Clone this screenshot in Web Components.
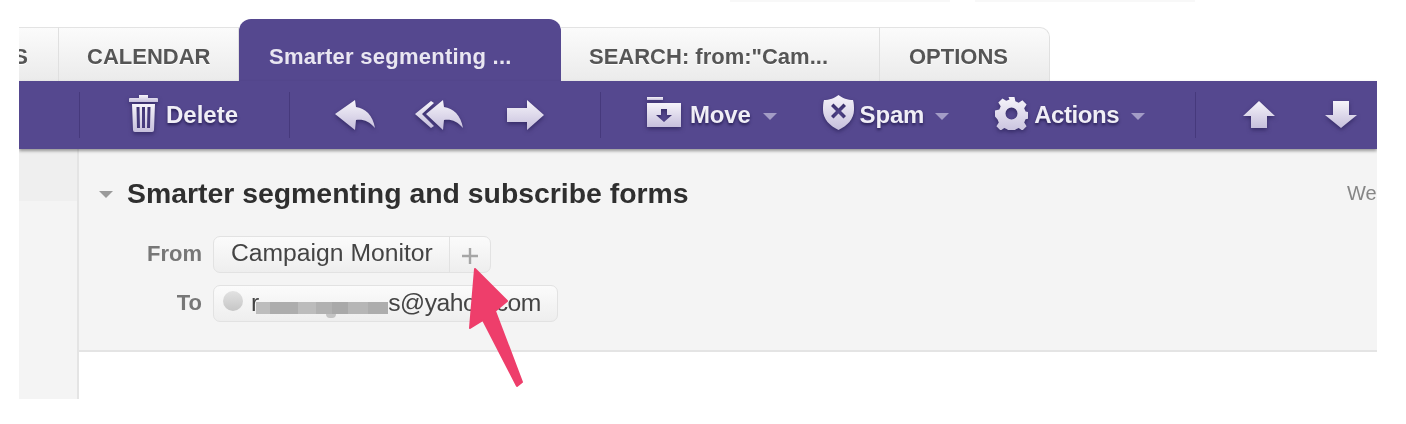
<!DOCTYPE html>
<html>
<head>
<meta charset="utf-8">
<title>Mail</title>
<style>
  html, body { margin: 0; background: #fff; }
  body { width: 1406px; height: 424px; overflow: hidden; font-family: "Liberation Sans", Arial, sans-serif; }
</style>
</head>
<body>
<top-strip></top-strip>
<mail-app>
  <mail-tabs>
    <mail-tab kind="clipped">S</mail-tab>
    <mail-tab style="width:180px">CALENDAR</mail-tab>
    <mail-tab active style="width:322px">Smarter segmenting ...</mail-tab>
    <mail-tab style="width:319px">SEARCH: from:"Cam...</mail-tab>
    <mail-tab kind="last" style="width:170px;padding-left:29px">OPTIONS</mail-tab>
  </mail-tabs>
  <mail-toolbar>
    <tool-sep style="margin-left:60px"></tool-sep>
    <tool-button icon="trash" style="margin-left:49px">Delete</tool-button>
    <tool-sep style="margin-left:51px"></tool-sep>
    <tool-button icon="reply" style="margin-left:45px"></tool-button>
    <tool-button icon="replyall" style="margin-left:40px"></tool-button>
    <tool-button icon="forward" style="margin-left:44px"></tool-button>
    <tool-sep style="margin-left:56px"></tool-sep>
    <tool-button icon="move" menu style="margin-left:46px;letter-spacing:-0.2px">Move</tool-button>
    <tool-button icon="spam" menu style="margin-left:46px;letter-spacing:-0.2px">Spam</tool-button>
    <tool-button icon="gear" menu style="margin-left:46px;letter-spacing:-0.45px">Actions</tool-button>
    <tool-sep style="margin-left:50px"></tool-sep>
    <tool-button icon="up" style="margin-left:47px"></tool-button>
    <tool-button icon="down" style="margin-left:50px"></tool-button>
  </mail-toolbar>
  <mail-body>
    <message-header subject="Smarter segmenting and subscribe forms" date="We">
      <address-row label="From">
        <address-chip add>Campaign Monitor</address-chip>
      </address-row>
      <address-row label="To">
        <address-chip avatar>r<blur-smear></blur-smear><span style="letter-spacing:-0.5px">s@yahoo.com</span></address-chip>
      </address-row>
    </message-header>
  </mail-body>
  <callout-arrow></callout-arrow>
</mail-app>

<script>
  /**
   * Toolbar icons: width, height, gap to the label, lift above the bar's centre, shape
   */
  const ICONS = {
    trash: {
      w: 29, h: 37, gap: 8, lift: 4,
      d: '<path d="M10 0h9v3h9a1 1 0 0 1 1 1v3H0V4a1 1 0 0 1 1-1h9z"/><path d="M3 9h23l-1 26a2 2 0 0 1-2 2H6a2 2 0 0 1-2-2zM7.500 12l.5 21h3l-.5-21zM13 12v21h3V12zM18.500 12l-.5 21h3l.5-21z" fill-rule="evenodd"/>'
    },
    reply: {
      w: 40, h: 30, gap: 0, lift: 1,
      d: '<path d="M0 14 20 0l1 7c9 1 17 8 19 21-6-7-12-9-19-8l-1 10z"/>'
    },
    replyall: {
      w: 48, h: 30, gap: 0, lift: 1,
      d: '<path d="M16 1l3 2L7 14l12 12-3 2L0 14z"/><path d="M11 14 28 0l1 7c9 1 17 8 19 21-6-7-12-9-19-8l-1 10z"/>'
    },
    forward: {
      w: 37, h: 30, gap: 0, lift: 0,
      d: '<path d="M0 8h20V0l17 15-17 15v-8H0z"/>'
    },
    move: {
      w: 34, h: 30, gap: 9, lift: 6,
      d: '<path d="M0 0h16v3H0z"/><path d="M0 6h34v24H0zM14 12v6h-5l8 7 8-7h-5v-6z" fill-rule="evenodd"/>'
    },
    spam: {
      w: 31, h: 35, gap: 6, lift: 5,
      caret: 11,
      d: '<path d="M15.500 0C19 3 25 5 30 5c1 3 1 7 1 10 0 9-7 16-15.500 20C7 31 0 24 0 15c0-3 0-7 1-10 5 0 11-2 14.500-5zM10.500 8.500 8 11l5 5-5 5 2.500 2.500 5-5 5 5L23 21l-5-5 5-5-2.500-2.500-5 5z" fill-rule="evenodd"/>'
    },
    gear: {
      w: 33, h: 33, gap: 6, lift: 4,
      d: '<path d="M13.500 0h6l.9 4.300 3.300 1.400 3.700-2.400 4.200 4.200-2.400 3.700 1.400 3.300 4.300.9v6l-4.300.9-1.400 3.300 2.400 3.700-4.200 4.200-3.700-2.400-3.300 1.400-.9 4.300h-6l-.9-4.300-3.300-1.400-3.700 2.400-4.200-4.200 2.400-3.700-1.400-3.300L0 19.500v-6l4.300-.9 1.400-3.300-2.400-3.700 4.200-4.200 3.700 2.400 3.300-1.400zM16.500 10.500a6 6 0 1 0 0 12 6 6 0 0 0 0-12z" fill-rule="evenodd"/>'
    },
    up: {
      w: 32, h: 27, gap: 0, lift: 1,
      d: '<path d="M16 0l16 15h-8v12H8V15H0z"/>'
    },
    down: {
      w: 32, h: 27, gap: 0, lift: 1,
      d: '<path d="M8 0h16v14h8L16 27 0 14h8z"/>'
    }
  };

  // Faint remains of what sits above the crop in the reference
  class TopStrip extends HTMLElement {
    constructor() {
      super();
      this.attachShadow({ mode: 'open' });
      this.shadowRoot.innerHTML = `
        <style>
          :host {
            display: flex;
            gap: 25px;
            height: 2px;
            padding-left: 730px;
          }
          i { display: block; width: 220px; background: #f8f8f8; }
        </style>
        <i></i><i></i>
      `;
    }
  }

  /**
   * Page frame
   */
  class MailApp extends HTMLElement {
    constructor() {
      super();
      this.attachShadow({ mode: 'open' });
      this.shadowRoot.innerHTML = `
        <style>
          :host {
            display: flex;
            flex-direction: column;
            position: relative;
            margin: 17px 29px 0 19px;
            height: 380px;
            overflow: hidden;
            filter: blur(0.6px);
          }
        </style>
        <slot></slot>
      `;
    }
  }

  class MailTabs extends HTMLElement {
    constructor() {
      super();
      this.attachShadow({ mode: 'open' });
      this.shadowRoot.innerHTML = `
        <style>
          :host {
            display: flex;
            align-items: flex-end;
            height: 62px;
            flex: none;
          }
        </style>
        <slot></slot>
      `;
    }
  }

  class MailTab extends HTMLElement {
    constructor() {
      super();
      this.attachShadow({ mode: 'open' });
      this.shadowRoot.innerHTML = `
        <style>
          :host {
            display: flex;
            box-sizing: border-box;
            align-items: flex-end;
            height: 54px;
            padding: 0 0 11px 28px;
            background: linear-gradient(#fbfbfb, #ebebeb);
            border-top: 1px solid #e3e3e3;
            border-right: 1px solid #e0e0e0;
            color: #555;
            font-size: 22px;
            font-weight: bold;
            line-height: 26px;
            white-space: nowrap;
            text-shadow: 0 1px 0 #fff;
          }
          :host([active]) {
            height: 62px;
            padding-left: 30px;
            padding-bottom: 11px;
            background: #55488f;
            border: 0;
            border-radius: 12px 12px 0 0;
            color: #e9e6f1;
            letter-spacing: 0.25px;
            text-shadow: none;
          }
          :host([kind="clipped"]) {
            width: 40px;
            justify-content: flex-end;
            padding: 0 30px 11px 0;
          }
          :host([kind="last"]) {
            border-radius: 0 10px 0 0;
          }
        </style>
        <slot></slot>
      `;
    }
  }

  class MailToolbar extends HTMLElement {
    constructor() {
      super();
      this.attachShadow({ mode: 'open' });
      this.shadowRoot.innerHTML = `
        <style>
          :host {
            display: flex;
            align-items: center;
            flex: none;
            position: relative;
            z-index: 1;
            height: 68px;
            background: #55488f;
            box-shadow: 0 2px 3px rgba(0, 0, 0, 0.38);
          }
        </style>
        <slot></slot>
      `;
    }
  }

  class ToolSep extends HTMLElement {
    constructor() {
      super();
      this.attachShadow({ mode: 'open' });
      this.shadowRoot.innerHTML = `
        <style>
          :host {
            display: block;
            flex: none;
            width: 1px;
            height: 46px;
            background: #46397c;
          }
        </style>
      `;
    }
  }

  class ToolButton extends HTMLElement {
    constructor() {
      super();
      this.attachShadow({ mode: 'open' });
      const icon = ICONS[this.getAttribute('icon')];
      const hasLabel = this.textContent.trim() !== '';
      this.shadowRoot.innerHTML = `
        <style>
          :host {
            display: flex;
            align-items: center;
            flex: none;
            color: #f0eef6;
            font-size: 24px;
            font-weight: bold;
            text-shadow: 0 2px 3px rgba(28, 20, 70, 0.8);
          }
          svg {
            display: block;
            flex: none;
            margin-bottom: ${icon.lift}px;
            filter: drop-shadow(0 2px 2px rgba(28, 20, 70, 0.55));
          }
          .label { margin-left: ${icon.gap}px; white-space: nowrap; }
          .caret {
            width: 0;
            height: 0;
            margin: 3px 0 0 ${icon.caret || 12}px;
            border-style: solid;
            border-width: 7px 7px 0 7px;
            border-color: #a39cc6 transparent transparent transparent;
          }
        </style>
        <svg width="${icon.w}" height="${icon.h}" viewBox="0 0 ${icon.w} ${icon.h}">
          <defs>
            <linearGradient id="g" x1="0" y1="0" x2="0" y2="1">
              <stop offset="0" stop-color="#f6f4fa"/>
              <stop offset="1" stop-color="#c6bfdc"/>
            </linearGradient>
          </defs>
          <g fill="url(#g)">${icon.d}</g>
        </svg>
        ${hasLabel ? '<span class="label"><slot></slot></span>' : ''}
        ${this.hasAttribute('menu') ? '<span class="caret"></span>' : ''}
      `;
    }
  }

  class MailBody extends HTMLElement {
    constructor() {
      super();
      this.attachShadow({ mode: 'open' });
      this.shadowRoot.innerHTML = `
        <style>
          :host {
            display: flex;
            flex: 1;
            min-height: 0;
          }
          .rail {
            flex: none;
            box-sizing: border-box;
            width: 60px;
            background: linear-gradient(#efefef 52px, #f4f4f4 52px);
            border-right: 2px solid #e4e4e4;
          }
          .main {
            flex: 1;
            min-width: 0;
            background: #fff;
          }
        </style>
        <div class="rail"></div>
        <div class="main"><slot></slot></div>
      `;
    }
  }

  class MessageHeader extends HTMLElement {
    constructor() {
      super();
      this.attachShadow({ mode: 'open' });
      this.shadowRoot.innerHTML = `
        <style>
          :host {
            display: block;
            box-sizing: border-box;
            height: 203px;
            padding-top: 29px;
            background: #f4f4f4;
            border-bottom: 2px solid #e4e4e4;
            overflow: hidden;
          }
          .title {
            display: flex;
            align-items: center;
            height: 30px;
            margin-bottom: 28px;
            padding-left: 20px;
          }
          .caret {
            flex: none;
            width: 0;
            height: 0;
            margin: 3px 14px 0 0;
            border-style: solid;
            border-width: 7px 7px 0 7px;
            border-color: #9a9a9a transparent transparent transparent;
          }
          h1 {
            flex: 1;
            margin: 0;
            color: #2f2f2f;
            font-size: 28.4px;
            font-weight: bold;
            white-space: nowrap;
          }
          .date {
            flex: none;
            width: 30px;
            color: #868686;
            font-size: 20px;
            white-space: nowrap;
            overflow: hidden;
          }
          .rows {
            display: flex;
            flex-direction: column;
            gap: 12px;
          }
        </style>
        <div class="title">
          <span class="caret"></span>
          <h1>${this.getAttribute('subject')}</h1>
          <span class="date">${this.getAttribute('date')}</span>
        </div>
        <div class="rows"><slot></slot></div>
      `;
    }
  }

  class AddressRow extends HTMLElement {
    constructor() {
      super();
      this.attachShadow({ mode: 'open' });
      this.shadowRoot.innerHTML = `
        <style>
          :host {
            display: flex;
            align-items: center;
            gap: 11px;
          }
          .label {
            flex: none;
            width: 123px;
            margin-bottom: 2px;
            text-align: right;
            color: #777;
            font-size: 22px;
            font-weight: bold;
          }
        </style>
        <span class="label">${this.getAttribute('label')}</span>
        <slot></slot>
      `;
    }
  }

  class AddressChip extends HTMLElement {
    constructor() {
      super();
      this.attachShadow({ mode: 'open' });
      const add = this.hasAttribute('add');
      const avatar = this.hasAttribute('avatar');
      this.shadowRoot.innerHTML = `
        <style>
          :host {
            display: flex;
            box-sizing: border-box;
            align-items: center;
            height: 37px;
            background: linear-gradient(#fbfbfb, #eeeeee);
            border: 1px solid #e2e2e2;
            border-radius: 7px;
            color: #444;
            font-size: 24.7px;
            white-space: nowrap;
          }
          .name {
            display: flex;
            align-items: center;
            height: 100%;
            padding: 0 16px 4px 17px;
            box-sizing: border-box;
          }
          :host([avatar]) .name { padding: 0 16px 2px 9px; }
          .dot {
            flex: none;
            width: 20px;
            height: 20px;
            margin: -4px 8px 0 0;
            border-radius: 50%;
            background: linear-gradient(#e2e2e2, #c6c6c6);
          }
          .plus {
            display: flex;
            align-items: center;
            justify-content: center;
            width: 41px;
            height: 100%;
            border-left: 1px solid #e2e2e2;
            box-sizing: border-box;
          }
          .plus svg { display: block; margin: 2px 0 0 1px; }
        </style>
        <div class="name">
          ${avatar ? '<span class="dot"></span>' : ''}
          <slot></slot>
        </div>
        ${add ? `<div class="plus">
          <svg width="16" height="16" viewBox="0 0 16 16"><path d="M6.800 0h2.400v6.800H16v2.400H9.200V16H6.800V9.200H0V6.800h6.800z" fill="#a6a6a6"/></svg>
        </div>` : ''}
      `;
    }
  }

  // Pixelated smear that hides part of the address in the reference
  class BlurSmear extends HTMLElement {
    constructor() {
      super();
      this.attachShadow({ mode: 'open' });
      this.shadowRoot.innerHTML = `
        <style>
          :host {
            display: block;
            flex: none;
            position: relative;
            width: 132px;
            height: 12px;
            margin: 10px 0 0 -3px;
            background: linear-gradient(90deg,
              #bdbdbd 0 14px, #adadad 14px 42px, #bcbcbc 42px 60px, #b1b1b1 60px 76px,
              #a9a9a9 76px 92px, #b6b6b6 92px 112px, #adadad 112px 132px);
          }
          :host::after {
            content: "";
            position: absolute;
            left: 70px;
            top: 12px;
            width: 10px;
            height: 4px;
            background: #c4c4c4;
            border-radius: 0 0 5px 5px;
          }
        </style>
      `;
    }
  }

  // Annotation drawn over the screenshot, so it sits at its own coordinates
  class CalloutArrow extends HTMLElement {
    constructor() {
      super();
      this.attachShadow({ mode: 'open' });
      this.shadowRoot.innerHTML = `
        <style>
          :host {
            position: absolute;
            left: 445px;
            top: 245px;
            z-index: 2;
            display: block;
            width: 64px;
            height: 128px;
          }
          svg { display: block; }
        </style>
        <svg width="64" height="128" viewBox="0 0 64 128">
          <path d="M11 5 43 37 31 47 58 118 53 122 19 56 6 64z" fill="#ee3e6b" stroke="#ee3e6b" stroke-width="2" stroke-linejoin="round"/>
        </svg>
      `;
    }
  }

  customElements.define('top-strip', TopStrip);
  customElements.define('mail-app', MailApp);
  customElements.define('mail-tabs', MailTabs);
  customElements.define('mail-tab', MailTab);
  customElements.define('mail-toolbar', MailToolbar);
  customElements.define('tool-sep', ToolSep);
  customElements.define('tool-button', ToolButton);
  customElements.define('mail-body', MailBody);
  customElements.define('message-header', MessageHeader);
  customElements.define('address-row', AddressRow);
  customElements.define('address-chip', AddressChip);
  customElements.define('blur-smear', BlurSmear);
  customElements.define('callout-arrow', CalloutArrow);
</script>
</body>
</html>
